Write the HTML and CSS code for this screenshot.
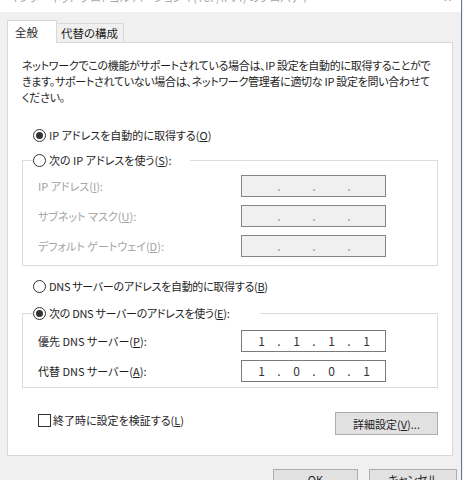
FILE: index.html
```
<!DOCTYPE html>
<html lang="ja">
<head>
<meta charset="utf-8">
<title>IPv4 のプロパティ</title>
<link rel="stylesheet" href="styles.css">
</head>
<body>
<div class="window">
  <div class="titlebar">
    <span class="title">インターネット プロトコル バージョン 4 (TCP/IPv4) のプロパティ</span>
    <span class="close">✕</span>
  </div>
  <div class="body">
    <div class="tabs">
      <div class="tab active">全般</div>
      <div class="tab">代替の構成</div>
    </div>
    <div class="panel">
      <p class="desc">
        <span class="line">ネットワークでこの機能がサポートされている場合は、IP 設定を自動的に取得することがで</span>
        <span class="line">きます。サポートされていない場合は、ネットワーク管理者に適切な IP 設定を問い合わせて</span>
        <span class="line">ください。</span>
      </p>
      <div class="option first"><span class="radio checked"></span><span>IP アドレスを自動的に取得する(<u>O</u>)</span></div>
      <fieldset class="group ipgroup">
        <legend class="leg1"><span class="radio"></span><span>次の IP アドレスを使う(<u>S</u>):</span></legend>
        <div class="rows">
          <div class="field disabled">
            <span>IP アドレス(<u>I</u>):</span>
            <div class="ip off"><span></span><span class="dot">.</span><span></span><span class="dot">.</span><span></span><span class="dot">.</span><span></span></div>
          </div>
          <div class="field disabled">
            <span>サブネット マスク(<u>U</u>):</span>
            <div class="ip off"><span></span><span class="dot">.</span><span></span><span class="dot">.</span><span></span><span class="dot">.</span><span></span></div>
          </div>
          <div class="field disabled">
            <span>デフォルト ゲートウェイ(<u>D</u>):</span>
            <div class="ip off"><span></span><span class="dot">.</span><span></span><span class="dot">.</span><span></span><span class="dot">.</span><span></span></div>
          </div>
        </div>
      </fieldset>
      <div class="option dns1"><span class="radio"></span><span>DNS サーバーのアドレスを自動的に取得する(<u>B</u>)</span></div>
      <fieldset class="group dnsgroup">
        <legend class="leg2"><span class="radio checked"></span><span>次の DNS サーバーのアドレスを使う(<u>E</u>):</span></legend>
        <div class="rows">
          <div class="field">
            <span>優先 DNS サーバー(<u>P</u>):</span>
            <div class="ip"><span>1</span><span class="dot">.</span><span>1</span><span class="dot">.</span><span>1</span><span class="dot">.</span><span>1</span></div>
          </div>
          <div class="field">
            <span>代替 DNS サーバー(<u>A</u>):</span>
            <div class="ip"><span>1</span><span class="dot">.</span><span>0</span><span class="dot">.</span><span>0</span><span class="dot">.</span><span>1</span></div>
          </div>
        </div>
      </fieldset>
      <div class="bottomrow">
        <div class="check"><span class="box"></span><span>終了時に設定を検証する(<u>L</u>)</span></div>
        <div class="btn adv">詳細設定(<u>V</u>)...</div>
      </div>
    </div>
    <div class="footer">
      <div class="btn ok">OK</div>
      <div class="btn cancel">キャンセル</div>
    </div>
  </div>
</div>
</body>
</html>
```

FILE: styles.css
```
* { box-sizing: border-box; }
html, body { margin: 0; padding: 0; }
body {
  width: 463px;
  height: 480px;
  overflow: hidden;
  background: #e9eef3;
  font-family: "Noto Sans CJK JP", "Noto Sans", sans-serif;
  font-size: 11px;
  font-feature-settings: "palt";
  color: #1e1e1e;
}
u { text-decoration: underline; text-underline-offset: 1px; }

.window {
  width: 462px;
  height: 480px;
  background: #f0f0f0;
  border-right: 1px solid #66788a;
  display: flex;
  flex-direction: column;
}
.titlebar {
  height: 12px;
  flex: none;
  background: #fff;
  overflow: hidden;
  display: flex;
  justify-content: space-between;
  padding: 0 9px 0 10px;
  color: #a6a6a6;
}
.title, .close { margin-top: -11px; line-height: 16px; white-space: nowrap; }

.body { padding: 8px 0 0 7px; }

.tabs {
  display: flex;
  align-items: flex-end;
  height: 23px;
  margin-bottom: -1px;
  position: relative;
  z-index: 1;
  font-size: 11.5px;
}
.tab {
  border: 1px solid #d9d9d9;
  border-bottom: none;
  line-height: 18px;
  white-space: nowrap;
}
.tab.active {
  width: 50px;
  height: 23px;
  padding: 2px 0 0 7px;
  background: #fff;
  color: #1e1e1e;
}
.tab:not(.active) {
  width: 68px;
  height: 19px;
  margin-left: -1px;
  margin-bottom: 1px;
  padding-left: 4px;
  background: #f0f0f0;
}

.panel {
  width: 446px;
  height: 414px;
  background: #fff;
  border: 1px solid #d9d9d9;
  padding-top: 14px;
}
.desc {
  margin: 0 0 0 14px;
  line-height: 16px;
  letter-spacing: -0.3px;
}
.line { display: block; white-space: nowrap; }

.option {
  display: flex;
  align-items: center;
  height: 16px;
  gap: 3px;
  margin-left: 25px;
  white-space: nowrap;
}
.option.first { margin-top: 22px; }
.option.dns1 { margin-top: 12px; letter-spacing: -0.3px; }

.radio {
  width: 13px;
  height: 13px;
  flex: none;
  border: 1px solid #333;
  border-radius: 50%;
  background: #fff;
  display: flex;
  align-items: center;
  justify-content: center;
}
.radio.checked::after {
  content: "";
  width: 7px;
  height: 7px;
  border-radius: 50%;
  background: #333;
}

.group {
  margin: 9px 14px 0 14px;
  padding: 0 0 0 15px;
  border: 1px solid #dcdcdc;
  min-width: 0;
}
.ipgroup { padding-top: 7px; padding-bottom: 8px; }
.dnsgroup { margin-top: 11px; padding-top: 9px; padding-bottom: 5px; }
legend {
  display: flex;
  align-items: center;
  gap: 3px;
  height: 16px;
  padding: 0;
  margin-left: -5px;
  white-space: nowrap;
  background: #fff;
}
.leg1 { padding-right: 18px; }
.leg2 { padding-right: 31px; letter-spacing: -0.3px; }

.rows { display: flex; flex-direction: column; gap: 8px; }
.field {
  display: grid;
  grid-template-columns: 203px 145px;
  align-items: center;
  white-space: nowrap;
}
.field.disabled > span { color: #a3a3a3; }

.ip {
  height: 22px;
  border: 1px solid #7a7a7a;
  background: #fff;
  display: grid;
  grid-template-columns: 31px 4px 31px 4px 31px 4px 31px;
  padding-left: 4px;
  align-items: center;
  text-align: center;
  color: #333;
  font-size: 12px;
  line-height: 20px;
}
.ip.off { background: #f0f0f0; border-color: #858585; }
.ip.off .dot { color: #909090; }

.bottomrow {
  display: flex;
  justify-content: space-between;
  align-items: flex-start;
  margin: 24px 14px 0 30px;
}
.check {
  display: flex;
  align-items: center;
  gap: 2px;
  height: 16px;
  white-space: nowrap;
}
.box {
  width: 13px;
  height: 13px;
  border: 1px solid #333;
  background: #fff;
  flex: none;
}
.btn {
  height: 23px;
  background: #e1e1e1;
  border: 1px solid #adadad;
  display: flex;
  align-items: center;
  justify-content: center;
  white-space: nowrap;
  color: #1e1e1e;
}
.adv { width: 103px; }

.footer {
  display: flex;
  justify-content: flex-end;
  gap: 11px;
  margin: 13px 4px 0 0;
}
.ok, .cancel { padding-bottom: 3px; }
.ok { width: 85px; }
.cancel { width: 88px; }
```
